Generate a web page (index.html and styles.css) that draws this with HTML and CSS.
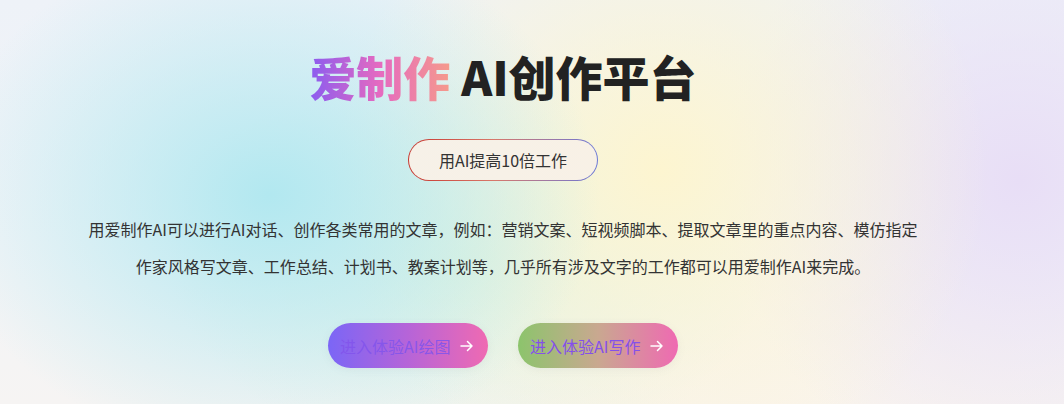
FILE: index.html
```html
<!DOCTYPE html>
<html lang="zh-CN">
<head>
<meta charset="utf-8">
<title>爱制作 AI创作平台</title>
<link rel="stylesheet" href="styles.css">
</head>
<body>
<main class="hero">
  <h1 class="title"><span class="brand">爱制作</span> AI创作平台</h1>
  <div class="badge">用AI提高10倍工作</div>
  <p class="desc">用爱制作AI可以进行AI对话、创作各类常用的文章，例如：营销文案、短视频脚本、提取文章里的重点内容、模仿指定作家风格写文章、工作总结、计划书、教案计划等，几乎所有涉及文字的工作都可以用爱制作AI来完成。</p>
  <div class="actions">
    <a class="btn btn-draw" href="#">进入体验AI绘图
      <svg class="arrow" viewBox="0 0 16 16" width="16" height="16"><path d="M2 8h11M8.5 3.5L13 8l-4.5 4.5" fill="none" stroke="#fff" stroke-width="1.5" stroke-linecap="round" stroke-linejoin="round"/></svg>
    </a>
    <a class="btn btn-write" href="#">进入体验AI写作
      <svg class="arrow" viewBox="0 0 16 16" width="16" height="16"><path d="M2 8h11M8.5 3.5L13 8l-4.5 4.5" fill="none" stroke="#fff" stroke-width="1.5" stroke-linecap="round" stroke-linejoin="round"/></svg>
    </a>
  </div>
</main>
</body>
</html>
```
FILE: styles.css
```css
html, body {
  margin: 0;
  height: 100%;
}
body {
  font-family: "Noto Sans CJK SC", "Noto Sans", sans-serif;
  color: #333;
  background:
    radial-gradient(ellipse 330px 260px at 270px 195px, rgba(178, 232, 240, 1), rgba(178, 232, 240, 0) 100%),
    radial-gradient(ellipse 330px 320px at 660px 170px, rgba(253, 245, 208, 1), rgba(253, 245, 208, 0) 100%),
    radial-gradient(ellipse 300px 300px at 1020px 180px, rgba(232, 222, 246, 1), rgba(232, 222, 246, 0) 100%),
    radial-gradient(ellipse 300px 200px at 470px 260px, rgba(215, 242, 228, 0.9), rgba(215, 242, 228, 0) 100%),
    radial-gradient(ellipse 400px 200px at 780px 404px, rgba(250, 244, 236, 0.9), rgba(250, 244, 236, 0) 100%),
    linear-gradient(180deg, #eef2f8 0%, #f2f4f7 60%, #f6f4f3 100%);
  overflow: hidden;
}
.hero {
  width: 1006px;
  padding-top: 48px;
  display: flex;
  flex-direction: column;
  align-items: center;
  text-align: center;
}
.title {
  margin: 0;
  font-size: 47px;
  line-height: 56px;
  font-weight: 900;
  color: #222;
}
.brand {
  background: linear-gradient(90deg, #8a5cf0 0%, #e56ac0 50%, #f59a8c 100%);
  -webkit-background-clip: text;
  background-clip: text;
  color: transparent;
}
.badge {
  margin-top: 35px;
  box-sizing: border-box;
  width: 190px;
  height: 42px;
  border-radius: 21px;
  border: 1px solid transparent;
  background:
    linear-gradient(90deg, #f6f1e8, #f8f1e6) padding-box,
    linear-gradient(90deg, #c8372f 0%, #d8786a 45%, #6a78d8 100%) border-box;
  font-size: 16px;
  line-height: 40px;
  color: #333;
}
.desc {
  margin: 30px 0 0;
  width: 836px;
  font-size: 16px;
  line-height: 37px;
  color: #333;
}
.actions {
  margin-top: 38px;
  display: flex;
  gap: 30px;
}
.btn {
  box-sizing: border-box;
  width: 160px;
  height: 45px;
  border-radius: 23px;
  padding: 0 13px 0 12px;
  display: flex;
  align-items: center;
  justify-content: space-between;
  font-size: 16px;
  text-decoration: none;
  box-shadow: 0 2px 8px rgba(120, 120, 140, 0.08);
}
.btn-draw {
  background: linear-gradient(90deg, #7b66f6 0%, #b664d8 50%, #ef6ab2 100%);
  color: rgba(130, 84, 236, 0.9);
}
.btn-write {
  background: linear-gradient(90deg, #8cc46c 0%, #c9a890 50%, #ef6ab2 100%);
  color: #8450ea;
}
.arrow {
  flex: none;
}
```
